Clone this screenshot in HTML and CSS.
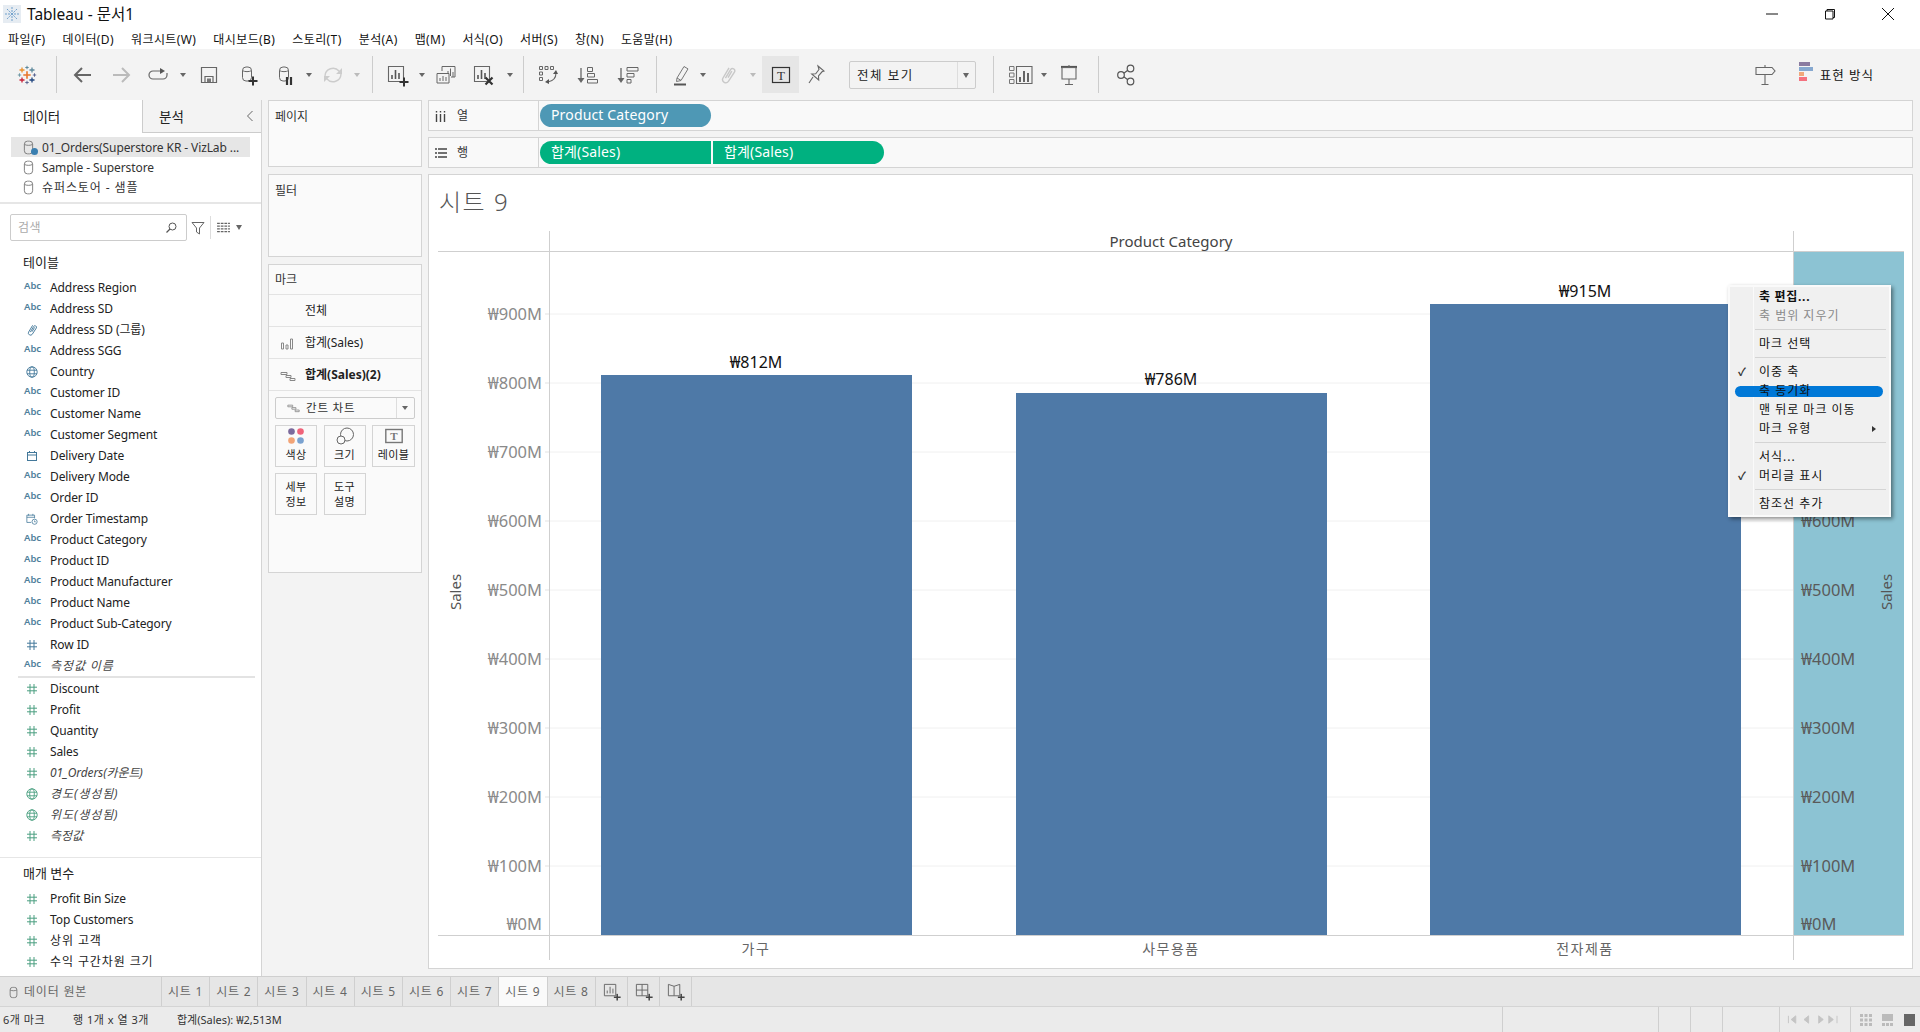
FILE: index.html
```html
<!DOCTYPE html>
<html lang="ko">
<head>
<meta charset="utf-8">
<title>Tableau - 문서1</title>
<link rel="stylesheet" href="styles.css">
</head>
<body>
<svg class="defs" aria-hidden="true">
  <symbol id="i-hash" viewBox="0 0 12 12"><path d="M4 1v10M8 1v10M1 4.2h10M1 7.8h10" fill="none" stroke="currentColor"/></symbol>
  <symbol id="i-globe" viewBox="0 0 12 12"><g fill="none" stroke="currentColor" stroke-width=".9"><circle cx="6" cy="6" r="5.2"/><ellipse cx="6" cy="6" rx="2.3" ry="5.2"/><path d="M1 4.2h10M1 7.8h10"/></g></symbol>
  <symbol id="i-cal" viewBox="0 0 12 12"><g fill="none" stroke="currentColor"><rect x="1.5" y="2.5" width="9" height="8"/><path d="M1.5 5h9M3.5 1v2M8.5 1v2"/></g></symbol>
  <symbol id="i-caltime" viewBox="0 0 14 14"><g fill="none" stroke="currentColor" stroke-width=".9"><path d="M6 11H1V2.5h9V6M1 5h9M3 1v2M8 1v2"/><circle cx="10" cy="10.2" r="3"/><path d="M10 8.7v1.6h1.4"/></g></symbol>
  <symbol id="i-clip" viewBox="0 0 12 14"><path d="M4 9.500 8 2.800a1.800 1.800 0 0 1 3.100 1.800L6.300 12a2.500 2.500 0 0 1-4.300-2.500L6.800 1.500M6 9 9 4" fill="none" stroke="currentColor" stroke-width="1.100"/></symbol>
  <symbol id="i-cyl" viewBox="0 0 12 16"><g fill="none" stroke="currentColor"><rect x="1.5" y="1" width="9" height="14" rx="3.5"/><path d="M1.5 4.6c2 1.4 7 1.4 9 0"/></g></symbol>
  <symbol id="i-plus" viewBox="0 0 10 10"><path d="M5 .5v9M.5 5h9" stroke="currentColor" stroke-width="2" fill="none"/></symbol>
  <symbol id="i-logo" viewBox="0 0 20 20"><g fill="none">
    <path d="M10 6.3v7.4M6.3 10h7.4" stroke="#e8762b" stroke-width="1.6"/>
    <path d="M5 2.5v5M2.5 5h5" stroke="#eb912b" stroke-width="1.3"/>
    <path d="M15 2.5v5M12.5 5h5" stroke="#5b879b" stroke-width="1.3"/>
    <path d="M5 12.5v5M2.5 15h5" stroke="#c72037" stroke-width="1.3"/>
    <path d="M15 12.5v5M12.5 15h5" stroke="#1f447e" stroke-width="1.3"/>
    <path d="M10 .8v3.4M8.3 2.5h3.4" stroke="#5b879b"/>
    <path d="M10 15.8v3.4M8.3 17.5h3.4" stroke="#5b6591"/>
    <path d="M2.5 8.3v3.4M.8 10h3.4" stroke="#7199a6"/>
    <path d="M17.5 8.3v3.4M15.8 10h3.4" stroke="#5b6591"/>
  </g></symbol>
  <symbol id="i-gantt" viewBox="0 0 16 12"><g fill="none" stroke="currentColor"><path d="M1 2.5h6v2H1zM6 5.5h5v2H6zM10 8.5h5v2h-5z"/></g></symbol>
</svg>

<div class="app">
  <header class="titlebar">
    <svg class="app-icon" viewBox="0 0 18 18"><rect width="18" height="18" fill="#e6ecf2"/><path d="M9 2v14M2 9h14M4 4l10 10M14 4 4 14" stroke="#6f9fcb" stroke-width="1" stroke-dasharray="2 1" fill="none"/></svg>
    <span class="title-text">Tableau - 문서1</span>
    <div class="win-controls">
      <svg class="win-btn" viewBox="0 0 12 12"><path d="M0 6h12" stroke="#111"/></svg>
      <svg class="win-btn" viewBox="0 0 12 12"><path d="M3 3V1.5h7.5v8H9M1.5 3H9v8H1.5z" fill="none" stroke="#111"/></svg>
      <svg class="win-btn" viewBox="0 0 12 12"><path d="M0 0l12 12M12 0 0 12" stroke="#111" fill="none"/></svg>
    </div>
  </header>
  <nav class="menubar">
    <span>파일(F)</span><span>데이터(D)</span><span>워크시트(W)</span><span>대시보드(B)</span><span>스토리(T)</span><span>분석(A)</span><span>맵(M)</span><span>서식(O)</span><span>서버(S)</span><span>창(N)</span><span>도움말(H)</span>
  </nav>

  <div class="toolbar">
    <div class="tb w56"><svg class="ic20" viewBox="0 0 20 20"><use href="#i-logo"/></svg></div>
    <i class="sep ml0 mr7"></i>
    <div class="tb w38"><svg class="ic" viewBox="0 0 24 24"><path d="M20 12H5M11 5l-7 7 7 7" fill="none" stroke="#666" stroke-width="2"/></svg></div>
    <div class="tb w38"><svg class="ic" viewBox="0 0 24 24"><path d="M4 12h15M13 5l7 7-7 7" fill="none" stroke="#bbb" stroke-width="2"/></svg></div>
    <div class="tb w36"><svg class="ic" viewBox="0 0 24 24"><path d="M14 8H7a4 4 0 0 0 0 8h10a4 4 0 0 0 4-4v-2" fill="none" stroke="#666" stroke-width="1.2"/><path d="M14 5l5 3-5 3z" fill="#555"/></svg></div>
    <div class="dd w14"></div>
    <div class="tb w38"><svg class="ic" viewBox="0 0 24 24"><path d="M4.5 4.500h15v15h-15z" fill="none" stroke="#666" stroke-width="1.2"/><path d="M8 19v-5.500h8V19" fill="none" stroke="#666" stroke-width="1.200"/><rect x="10" y="15.500" width="4" height="3.500" fill="#777"/></svg></div>
    <div class="tb w38 dark"><svg class="ic" viewBox="0 0 24 24"><use href="#i-cyl" x="6" y="3" width="12" height="16" color="#666"/><use href="#i-plus" x="13" y="13" width="10" height="10" color="#333"/></svg></div>
    <div class="tb w36"><svg class="ic" viewBox="0 0 24 24"><use href="#i-cyl" x="6" y="3" width="12" height="16" color="#666"/><path d="M15 14v8M19 14v8" stroke="#333" stroke-width="2.200"/></svg></div>
    <div class="dd w14"></div>
    <div class="tb w34"><svg class="ic" viewBox="0 0 24 24"><path d="M4 13a8 8 0 0 1 14-5l2 2M20 11a8 8 0 0 1-14 5l-2-2" fill="none" stroke="#ccc" stroke-width="1.400"/><path d="M21 5v6h-6zM3 19v-6h6z" fill="#ccc"/></svg></div>
    <div class="dd w14 light"></div>
    <i class="sep ml8 mr6"></i>
    <div class="tb w36"><svg class="ic" viewBox="0 0 24 24"><path d="M3.500 3.500h15v15h-15z" fill="none" stroke="#666" stroke-width="1.100"/><path d="M7 16v-4M10.500 16V7M14 16v-6" stroke="#555" stroke-width="1.600"/><use href="#i-plus" x="14" y="14" width="10" height="10" color="#333"/></svg></div>
    <div class="dd w14"></div>
    <div class="tb w34"><svg class="ic" viewBox="0 0 24 24"><path d="M8 8V3.500h13V14h-4" fill="none" stroke="#666"/><path d="M14 8v6M16.500 5.500V13M19 9v5" stroke="#666"/><path d="M3 10.500h12V20H3z" fill="#f3f3f3" stroke="#666"/><path d="M6 18v-3M9 18v-5M12 18v-4" stroke="#666"/></svg></div>
    <div class="tb w40"><svg class="ic" viewBox="0 0 24 24"><path d="M3.500 3.500h15v15h-15z" fill="none" stroke="#666" stroke-width="1.100"/><path d="M7 16v-4M10.500 16V7M14 16v-6" stroke="#555" stroke-width="1.600"/><path d="M14.500 14.500l7 7M21.500 14.500l-7 7" stroke="#333" stroke-width="2.200"/></svg></div>
    <div class="dd w14"></div>
    <i class="sep ml6 mr5"></i>
    <div class="tb w38"><svg class="ic" viewBox="0 0 24 24"><path d="M3.500 3.500h3v3h-3zM9 3.500h3v3H9zM14.500 3.500h3v3h-3zM3.500 9h3v3h-3zM3.500 14.500h3v3h-3z" fill="none" stroke="#666"/><path d="M20 10c0 5-3 8-8 9" fill="none" stroke="#666" stroke-width="1.100"/><path d="M20 7l-3 4h5zM9 19l4-3v5z" fill="#555"/></svg></div>
    <div class="tb w40"><svg class="ic" viewBox="0 0 24 24"><path d="M6 5v12" stroke="#666" stroke-width="1.300"/><path d="M2.500 15 6 20l3.500-5z" fill="#666"/><path d="M12.500 4.500h5v4h-5zM12.500 10.500h7v3.500h-7zM12.500 16.500h10v3.500h-10z" fill="none" stroke="#666"/></svg></div>
    <div class="tb w40"><svg class="ic" viewBox="0 0 24 24"><path d="M6 5v12" stroke="#666" stroke-width="1.300"/><path d="M2.500 15 6 20l3.500-5z" fill="#666"/><path d="M12 4.500h11v3.500H12zM12 10.500h7v3.500h-7zM12 16.500h4v3.500h-4z" fill="none" stroke="#666"/></svg></div>
    <i class="sep ml9 mr9"></i>
    <div class="tb w32"><svg class="ic" viewBox="0 0 24 24"><path d="M7 15 14 3.500l4 2.400-7 11.600-4.500 1z" fill="none" stroke="#777"/><path d="M7 15l4 2.400" stroke="#777"/><path d="M4 21.500h12" stroke="#555" stroke-width="2"/></svg></div>
    <div class="dd w10"></div>
    <div class="tb w40"><svg class="ic" viewBox="0 0 24 24"><use href="#i-clip" x="4" y="3" width="16" height="18" color="#c8c8c8"/></svg></div>
    <div class="dd w10 light"></div>
    <div class="tb w37 ml4 active"><svg class="ic" viewBox="0 0 24 24"><rect x="3.500" y="4.500" width="17" height="15" fill="none" stroke="#333" stroke-width="1.200"/><text class="t-icon" x="12" y="16.500" text-anchor="middle">T</text></svg></div>
    <div class="tb w34"><svg class="ic" viewBox="0 0 24 24"><path d="M14 3l6 5-2 .8-3.500 4.200.2 4-7-6 4-.2L15 6.500z M9 14l-4 6" fill="none" stroke="#666" stroke-width="1.100"/></svg></div>
    <div class="fit">
      <span class="fit-label">전체 보기</span>
      <span class="fit-arrow"></span>
    </div>
    <i class="sep ml17 mr9"></i>
    <div class="tb w36"><svg class="ic28" viewBox="0 0 28 24"><path d="M2.500 3.500H7v4H2.500zM2.500 10H7v4H2.500zM2.500 16.500H7v4H2.500z" fill="none" stroke="#777"/><path d="M9.500 3.500H25v17H9.500z" fill="none" stroke="#666" stroke-width="1.100"/><path d="M13 19v-5M17 19V8M21 19v-9" stroke="#666" stroke-width="2"/></svg></div>
    <div class="dd w10"></div>
    <div class="tb w40"><svg class="ic" viewBox="0 0 24 24"><path d="M4 4h16" stroke="#555" stroke-width="2.200"/><path d="M5 4.500h14v11.500H5zM12 16v5M8 21.500h8M12 2v2" fill="none" stroke="#666" stroke-width="1.100"/></svg></div>
    <i class="sep ml9 mr8"></i>
    <div class="tb w38"><svg class="ic" viewBox="0 0 24 24"><g fill="none" stroke="#555" stroke-width="1.200"><circle cx="7" cy="12" r="3.300"/><circle cx="16.500" cy="5.500" r="3.300"/><circle cx="16.500" cy="18.500" r="3.300"/><path d="M9.800 10.200 13.800 7.300M9.800 13.800l4 2.900"/></g></svg></div>
    <div class="tb-right">
      <div class="tb w38"><svg class="ic" viewBox="0 0 24 24"><path d="M3 4.500h16l3 3.500-3 3.500H3zM12 2v2.500M12 11.500V21M8.500 21.500h7" fill="none" stroke="#666" stroke-width="1.100"/></svg></div>
      <svg class="showme-ic" viewBox="0 0 14 20"><rect width="11" height="4" fill="#8a7ba0"/><rect y="5" width="14" height="4" fill="#86a8cf"/><rect y="10" width="5" height="4" fill="#f0a77a"/><rect y="15" width="8" height="4" fill="#f4727f"/></svg>
      <span class="showme-text">표현 방식</span>
    </div>
  </div>

  <div class="workspace">
    <aside class="data-pane">
      <div class="pane-tabs">
        <div class="pane-tab on">데이터</div>
        <div class="pane-tab">분석</div>
        <svg class="chev" viewBox="0 0 8 12"><path d="M6.500 1 1.500 6l5 5" fill="none" stroke="#666"/></svg>
      </div>
      <div class="sources">
        <div class="source sel"><span class="src-ic"><svg class="cyl" viewBox="0 0 12 16"><use href="#i-cyl"/></svg><b class="live"></b></span><span class="src-name">01_Orders(Superstore KR - VizLab ...</span></div>
        <div class="source"><span class="src-ic"><svg class="cyl" viewBox="0 0 12 16"><use href="#i-cyl"/></svg></span><span class="src-name">Sample - Superstore</span></div>
        <div class="source"><span class="src-ic"><svg class="cyl" viewBox="0 0 12 16"><use href="#i-cyl"/></svg></span><span class="src-name ko">슈퍼스토어 - 샘플</span></div>
      </div>
      <div class="search-row">
        <div class="search"><span class="ph">검색</span><svg class="mag" viewBox="0 0 12 12"><circle cx="7.500" cy="4.500" r="3.500" fill="none" stroke="#555"/><path d="M5 7 1.500 10.500" stroke="#555" stroke-width="1.200"/></svg></div>
        <svg class="funnel" viewBox="0 0 14 14"><path d="M1 1.500h12L8.500 7v6l-3-2V7z" fill="none" stroke="#666"/></svg>
        <i class="mini-sep"></i>
        <svg class="gridview" viewBox="0 0 14 12"><path d="M0 1.500h3M4 1.500h3M8 1.500h3M12 1.500h2M0 4.500h3M4 4.500h3M8 4.500h3M12 4.500h2M0 7.500h3M4 7.500h3M8 7.500h3M12 7.500h2M0 10.500h3M4 10.500h3M8 10.500h3M12 10.500h2" stroke="#666" stroke-width="1.300"/></svg>
        <i class="caret"></i>
      </div>
      <h3 class="sec-head first">테이블</h3>
      <ul class="fields dim">
        <li><span class="abc">Abc</span>Address Region</li>
        <li><span class="abc">Abc</span>Address SD</li>
        <li><svg class="f-ic" viewBox="0 0 12 14"><use href="#i-clip"/></svg>Address SD (그룹)</li>
        <li><span class="abc">Abc</span>Address SGG</li>
        <li><svg class="f-ic" viewBox="0 0 12 12"><use href="#i-globe"/></svg>Country</li>
        <li><span class="abc">Abc</span>Customer ID</li>
        <li><span class="abc">Abc</span>Customer Name</li>
        <li><span class="abc">Abc</span>Customer Segment</li>
        <li><svg class="f-ic" viewBox="0 0 12 12"><use href="#i-cal"/></svg>Delivery Date</li>
        <li><span class="abc">Abc</span>Delivery Mode</li>
        <li><span class="abc">Abc</span>Order ID</li>
        <li><svg class="f-ic" viewBox="0 0 14 14"><use href="#i-caltime"/></svg>Order Timestamp</li>
        <li><span class="abc">Abc</span>Product Category</li>
        <li><span class="abc">Abc</span>Product ID</li>
        <li><span class="abc">Abc</span>Product Manufacturer</li>
        <li><span class="abc">Abc</span>Product Name</li>
        <li><span class="abc">Abc</span>Product Sub-Category</li>
        <li><svg class="f-ic" viewBox="0 0 12 12"><use href="#i-hash"/></svg>Row ID</li>
        <li class="calc"><span class="abc">Abc</span><em class="ko">측정값 이름</em></li>
      </ul>
      <ul class="fields meas">
        <li><svg class="f-ic" viewBox="0 0 12 12"><use href="#i-hash"/></svg>Discount</li>
        <li><svg class="f-ic" viewBox="0 0 12 12"><use href="#i-hash"/></svg>Profit</li>
        <li><svg class="f-ic" viewBox="0 0 12 12"><use href="#i-hash"/></svg>Quantity</li>
        <li><svg class="f-ic" viewBox="0 0 12 12"><use href="#i-hash"/></svg>Sales</li>
        <li class="calc"><svg class="f-ic" viewBox="0 0 12 12"><use href="#i-hash"/></svg><em>01_Orders(카운트)</em></li>
        <li class="calc"><svg class="f-ic" viewBox="0 0 12 12"><use href="#i-globe"/></svg><em class="ko">경도(생성됨)</em></li>
        <li class="calc"><svg class="f-ic" viewBox="0 0 12 12"><use href="#i-globe"/></svg><em class="ko">위도(생성됨)</em></li>
        <li class="calc"><svg class="f-ic" viewBox="0 0 12 12"><use href="#i-hash"/></svg><em>측정값</em></li>
      </ul>
      <h3 class="sec-head param">매개 변수</h3>
      <ul class="fields params">
        <li><svg class="f-ic" viewBox="0 0 12 12"><use href="#i-hash"/></svg>Profit Bin Size</li>
        <li><svg class="f-ic" viewBox="0 0 12 12"><use href="#i-hash"/></svg>Top Customers</li>
        <li><svg class="f-ic" viewBox="0 0 12 12"><use href="#i-hash"/></svg><span class="ko">상위 고객</span></li>
        <li><svg class="f-ic" viewBox="0 0 12 12"><use href="#i-hash"/></svg><span class="ko">수익 구간차원 크기</span></li>
      </ul>
    </aside>

    <section class="cards">
      <div class="card pages"><div class="card-title">페이지</div></div>
      <div class="card filters"><div class="card-title">필터</div></div>
      <div class="card marks">
        <div class="card-title mark-head">마크</div>
        <div class="mark-row"><span class="mark-ic"></span>전체</div>
        <div class="mark-row"><span class="mark-ic"><svg class="bars-ic" viewBox="0 0 14 12"><path d="M1.500 5h2v6h-2zM6 7h2v4H6zM10.500 1h2v10h-2z" fill="none" stroke="#888"/></svg></span>합계(Sales)</div>
        <div class="mark-row strong"><span class="mark-ic"><svg class="gantt-ic" viewBox="0 0 16 12"><use href="#i-gantt"/></svg></span>합계(Sales)(2)</div>
        <div class="mark-type">
          <svg class="gantt-sm" viewBox="0 0 16 12"><use href="#i-gantt"/></svg>
          <span>간트 차트</span>
          <span class="mt-arrow"></span>
        </div>
        <div class="mark-btns">
          <div class="mbtn"><svg class="mb-ic" viewBox="0 0 18 18"><circle cx="4.500" cy="4.500" r="3.300" fill="#7b6a9c"/><circle cx="13.500" cy="4.500" r="3.300" fill="#f0637a"/><circle cx="4.500" cy="13.500" r="3.300" fill="#f2a477"/><circle cx="13.500" cy="13.500" r="3.300" fill="#7aa2d0"/></svg>색상</div>
          <div class="mbtn"><svg class="mb-ic" viewBox="0 0 18 18"><circle cx="11" cy="7.500" r="6.500" fill="none" stroke="#666"/><circle cx="5" cy="13" r="4" fill="#fafafa" stroke="#666"/></svg>크기</div>
          <div class="mbtn"><svg class="mb-ic" viewBox="0 0 18 18"><rect x=".8" y="2.500" width="16.400" height="13" fill="none" stroke="#777" stroke-width="1.400"/><text class="t-mark" x="9" y="12.800" text-anchor="middle">T</text></svg>레이블</div>
          <div class="mbtn two">세부<br>정보</div>
          <div class="mbtn two">도구<br>설명</div>
        </div>
      </div>
    </section>

    <section class="main">
      <div class="shelf">
        <div class="shelf-label"><svg class="sh-ic" viewBox="0 0 12 12"><path d="M1.500 1v1.500M5.500 1v1.500M9.500 1v1.500M1.500 4v8M5.500 4v8M9.500 4v8" stroke="#444" stroke-width="1.400"/></svg>열</div>
        <div class="pill blue">Product Category</div>
      </div>
      <div class="shelf">
        <div class="shelf-label"><svg class="sh-ic" viewBox="0 0 12 12"><path d="M0 2h2M3 2h9M0 6h2M3 6h9M0 10h2M3 10h9" stroke="#444" stroke-width="1.400"/></svg>행</div>
        <div class="pill green first">합계(Sales)</div>
        <div class="pill green last">합계(Sales)</div>
      </div>
      <div class="viz">
        <div class="viz-title">시트 9</div>
        <svg class="chart" viewBox="429 231 1483 737">
          <g class="grid">
            <path d="M549 866H1793M549 797H1793M549 728H1793M549 659H1793M549 590H1793M549 521H1793M549 452H1793M549 383H1793M549 314H1793"/>
          </g>
          <g class="ticks"><path d="M545 866h4M545 797h4M545 728h4M545 659h4M545 590h4M545 521h4M545 452h4M545 383h4M545 314h4"/></g>
          <rect x="1793" y="252" width="111" height="683" fill="#8cc3d3"/>
          <rect x="601" y="375" width="311" height="560" fill="#4e79a7"/>
          <rect x="1016" y="393" width="311" height="542" fill="#4e79a7"/>
          <rect x="1430" y="304" width="311" height="631" fill="#4e79a7"/>
          <g class="axis-lines">
            <path d="M438 251.500H1904M438 935.500H1904M549.500 231V960M1793.500 231V960"/>
          </g>
          <text class="hdr" x="1171" y="247" text-anchor="middle">Product Category</text>
          <g class="ax-l" text-anchor="end">
            <text x="542" y="320">₩900M</text><text x="542" y="389">₩800M</text><text x="542" y="458">₩700M</text><text x="542" y="527">₩600M</text><text x="542" y="596">₩500M</text><text x="542" y="665">₩400M</text><text x="542" y="734">₩300M</text><text x="542" y="803">₩200M</text><text x="542" y="872">₩100M</text><text x="542" y="930">₩0M</text>
          </g>
          <g class="ax-r">
            <text x="1801" y="527">₩600M</text><text x="1801" y="596">₩500M</text><text x="1801" y="665">₩400M</text><text x="1801" y="734">₩300M</text><text x="1801" y="803">₩200M</text><text x="1801" y="872">₩100M</text><text x="1801" y="930">₩0M</text>
          </g>
          <text class="ax-title" transform="translate(461 592) rotate(-90)" text-anchor="middle">Sales</text>
          <text class="ax-title" transform="translate(1892 592) rotate(-90)" text-anchor="middle">Sales</text>
          <g class="val" text-anchor="middle">
            <text x="756" y="368">₩812M</text><text x="1171" y="385">₩786M</text><text x="1585" y="297">₩915M</text>
          </g>
          <g class="cat" text-anchor="middle">
            <text x="756" y="954">가구</text><text x="1171" y="954">사무용품</text><text x="1585" y="954">전자제품</text>
          </g>
        </svg>
      </div>
    </section>
  </div>

  <div class="tabbar">
    <div class="tab src"><svg class="tab-cyl" viewBox="0 0 12 16"><use href="#i-cyl"/></svg>데이터 원본</div>
    <div class="tab">시트 1</div><div class="tab">시트 2</div><div class="tab">시트 3</div><div class="tab">시트 4</div><div class="tab">시트 5</div><div class="tab">시트 6</div><div class="tab">시트 7</div><div class="tab on">시트 9</div><div class="tab">시트 8</div>
    <div class="tab add"><svg class="tab-ic" viewBox="0 0 20 20"><path d="M2.500 2.500h12v12h-12z" fill="none" stroke="#666"/><path d="M5.500 12V9M8.500 12V5M11.500 12V7" stroke="#666"/><use href="#i-plus" x="12" y="12" width="8" height="8" color="#444"/></svg></div>
    <div class="tab add"><svg class="tab-ic" viewBox="0 0 20 20"><path d="M2.500 2.500h12v12h-12zM2.500 8.500h12M8.500 2.500v12" fill="none" stroke="#666"/><use href="#i-plus" x="12" y="12" width="8" height="8" color="#444"/></svg></div>
    <div class="tab add"><svg class="tab-ic" viewBox="0 0 20 20"><path d="M2.500 2.500l6 2 6-2v12h-6l-6 0zM8.500 4.500v10" fill="none" stroke="#666"/><use href="#i-plus" x="12" y="12" width="8" height="8" color="#444"/></svg></div>
  </div>

  <footer class="status">
    <span class="st-a">6개 마크</span>
    <span class="st-b">행 1개 x 열 3개</span>
    <span class="st-c">합계(Sales): ₩2,513M</span>
    <div class="st-cell w156"></div>
    <div class="st-cell w32"></div>
    <div class="st-cell w32"></div>
    <div class="st-cell w57"></div>
    <div class="st-cell w71 navs"><svg class="nav-ic" viewBox="0 0 60 12"><path d="M1 2v8M9 2 4 6l5 4zM23 2l-5 4 5 4zM34 2l5 4-5 4zM45 2l5 4-5 4zM54 2v8" stroke="#c4c4c4" fill="#c4c4c4"/></svg></div>
    <div class="st-cell views"><svg class="view-ic" viewBox="0 0 60 12"><path d="M0 0h3v3H0zM4.500 0h3v3h-3zM9 0h3v3H9zM0 4.500h3v3H0zM4.500 4.500h3v3h-3zM9 4.500h3v3H9zM0 9h3v3H0zM4.500 9h3v3h-3zM9 9h3v3H9z" fill="#bbb"/><path d="M22 0h11v7H22zM22 9h3v3h-3zM26 9h3v3h-3zM30 9h3v3h-3z" fill="#bbb"/><rect x="44" y="0" width="11" height="12" fill="#666"/></svg></div>
  </footer>

  <div class="ctx-menu">
    <div class="ctx-item bold">축 편집...</div>
    <div class="ctx-item off">축 범위 지우기</div>
    <div class="ctx-sep"></div>
    <div class="ctx-item">마크 선택</div>
    <div class="ctx-sep"></div>
    <div class="ctx-item checked">이중 축</div>
    <div class="ctx-item hot"><span>축 동기화</span></div>
    <div class="ctx-item">맨 뒤로 마크 이동</div>
    <div class="ctx-item sub">마크 유형</div>
    <div class="ctx-sep"></div>
    <div class="ctx-item">서식...</div>
    <div class="ctx-item checked">머리글 표시</div>
    <div class="ctx-sep"></div>
    <div class="ctx-item">참조선 추가</div>
  </div>
</div>
</body>
</html>
```

FILE: styles.css
```css
* { box-sizing: border-box; }
html, body { margin: 0; padding: 0; }
body {
  width: 1920px; height: 1032px; overflow: hidden; background: #fff; color: #222;
  font: 12px/1.2 "Noto Sans", "Noto Sans CJK KR", sans-serif;
}
.defs { position: absolute; width: 0; height: 0; }
ul { list-style: none; margin: 0; padding: 0; }
h3 { margin: 0; font-weight: 400; }
em { font-style: italic; color: #444; }
i { display: block; font-style: normal; }
.ko { letter-spacing: .9px; }
.app { position: relative; width: 1920px; height: 1032px; display: flex; flex-direction: column; }

/* title + menu */
.titlebar { height: 28px; display: flex; align-items: center; padding-left: 3px; flex: none; }
.app-icon { width: 18px; height: 18px; }
.title-text { margin-left: 6px; font-size: 15.500px; color: #111; }
.win-controls { margin-left: auto; display: flex; gap: 46px; padding-right: 26px; }
.win-btn { width: 12px; height: 12px; }
.menubar { height: 21px; display: flex; align-items: center; gap: 17px; padding: 3px 0 0 8px; flex: none; color: #111; letter-spacing: .4px; }

/* toolbar */
.toolbar { height: 51px; flex: none; background: #f3f3f3; display: flex; align-items: center; }
.tb { height: 37px; display: flex; align-items: center; justify-content: center; flex: none; }
.w32 { width: 32px; } .w34 { width: 34px; } .w36 { width: 36px; } .w37 { width: 37px; } .w38 { width: 38px; } .w40 { width: 40px; } .w56 { width: 56px; }
.w10 { width: 10px; } .w14 { width: 14px; }
.ic { width: 24px; height: 24px; }
.ic20 { width: 20px; height: 20px; margin-left: -2px; }
.ic28 { width: 28px; height: 24px; }
.dd { height: 37px; flex: none; position: relative; }
.dd::after { content: ""; position: absolute; left: 50%; top: 17px; margin-left: -3px; border: 3px solid transparent; border-top: 4px solid #666; border-bottom: 0; }
.dd.light::after { border-top-color: #bbb; }
.sep { width: 1px; height: 37px; background: #ccc; flex: none; }
.ml0 { margin-left: 0; } .ml4 { margin-left: 4px; } .ml6 { margin-left: 6px; } .ml8 { margin-left: 8px; } .ml9 { margin-left: 9px; } .ml10 { margin-left: 10px; } .ml17 { margin-left: 17px; }
.mr5 { margin-right: 5px; } .mr6 { margin-right: 6px; } .mr7 { margin-right: 7px; } .mr8 { margin-right: 8px; } .mr9 { margin-right: 9px; }
.active { background: #e6e6e6; }
.t-icon { font: 13px "Liberation Serif", serif; fill: #333; }
.t-mark { font: bold 11px "Liberation Serif", serif; fill: #777; }
.fit { margin-left: 16px; width: 127px; height: 28px; flex: none; border: 1px solid #ccc; border-radius: 2px; display: flex; align-items: center; position: relative; padding-left: 7px; letter-spacing: 1.500px; color: #222; font-size: 12.500px; }
.fit-label { flex: 1; padding-top: 1px; }
.fit-arrow { width: 18px; height: 26px; border-left: 1px solid #ddd; position: relative; }
.fit-arrow::after { content: ""; position: absolute; left: 5px; top: 11px; border: 3.500px solid transparent; border-top: 5px solid #666; border-bottom: 0; }
.tb-right { margin-left: auto; display: flex; align-items: center; padding-right: 46px; }
.showme-ic { width: 14px; height: 20px; margin-left: 15px; margin-top: -6px; }
.showme-text { margin-left: 7px; padding-top: 2px; color: #111; letter-spacing: 1px; font-size: 12.500px; }

/* workspace */
.workspace { height: 876px; flex: none; background: #f3f3f3; display: flex; }
.data-pane { width: 262px; flex: none; background: #fff; border-right: 1px solid #d4d4d4; }
.pane-tabs { height: 33px; display: flex; position: relative; }
.pane-tab { padding-left: 16px; width: 118px; line-height: 35px; font-size: 13.500px; color: #222; background: #f3f3f3; border-bottom: 1px solid #ccc; flex: 1; }
.pane-tab.on { flex: none; width: 143px; padding-left: 23px; background: #fff; border-right: 1px solid #ccc; border-bottom: 0; }
.chev { position: absolute; right: 7px; top: 10px; width: 8px; height: 12px; }
.sources { height: 71px; padding: 4px 0 0 11px; border-bottom: 2px solid #e6e6e6; }
.source { height: 20px; width: 239px; display: flex; align-items: center; color: #333; }
.source.sel { background: #e6e6e6; }
.src-ic { width: 31px; padding-left: 12px; position: relative; display: flex; }
.src-name { padding-top: 2px; letter-spacing: -.1px; }
.src-name.ko { letter-spacing: .9px; }
.cyl { width: 11px; height: 15px; color: #777; }
.live { position: absolute; left: 20px; top: 8px; width: 7px; height: 7px; border-radius: 50%; background: #3a7fb0; }
.search-row { height: 27px; margin: 10px 0 0 10px; display: flex; align-items: center; }
.search { width: 177px; height: 27px; border: 1px solid #ccc; border-radius: 2px; display: flex; align-items: center; justify-content: space-between; padding: 0 9px 0 7px; color: #aaa; }
.ph { padding-top: 2px; letter-spacing: .5px; }
.mag { width: 12px; height: 12px; }
.funnel { width: 14px; height: 14px; margin-left: 4px; }
.mini-sep { width: 1px; height: 23px; background: #ddd; margin-left: 5px; }
.gridview { width: 13px; height: 11px; margin-left: 6px; }
.caret { margin-left: 6px; border: 3.500px solid transparent; border-top: 5px solid #666; border-bottom: 0; }
.sec-head { font-size: 13px; color: #222; padding-left: 23px; }
.sec-head.first { height: 36px; line-height: 42px; }
.sec-head.param { height: 31px; line-height: 30px; border-top: 1px solid #e6e6e6; margin-top: 11px; }
.fields li { height: 21px; display: flex; align-items: center; padding: 2px 0 0 50px; position: relative; color: #222; white-space: nowrap; letter-spacing: -.1px; }
.fields li .ko { letter-spacing: .9px; }
.abc { position: absolute; left: 24px; top: 3px; width: 16px; font-size: 9.500px; font-weight: 600; text-align: center; color: #4f7f9b; letter-spacing: 0; }
.f-ic { position: absolute; left: 26px; top: 5px; width: 12px; height: 12px; color: #43789a; }
.fields.dim { border-bottom: 0; position: relative; }
.fields.dim::after { content: ""; display: block; height: 2px; margin: 0 6px 0 18px; background: #e3e3e3; }
.meas .f-ic, .params .f-ic { color: #4a9f80; }

/* cards */
.cards { width: 154px; margin-left: 6px; flex: none; display: flex; flex-direction: column; gap: 7px; }
.card { background: #fafafa; border: 1px solid #d4d4d4; }
.pages { height: 67px; } .filters { height: 83px; } .marks { height: 309px; }
.card-title { padding: 9px 6px; color: #333; }
.mark-head { height: 30px; padding: 8px 6px 0; border-bottom: 1px solid #e3e3e3; }
.mark-row { height: 32px; border-bottom: 1px solid #e3e3e3; padding-top: 2px; display: flex; align-items: center; color: #222; }
.mark-row.strong { font-weight: 700; }
.mark-ic { width: 36px; padding-left: 11px; display: flex; color: #888; }
.bars-ic { width: 14px; height: 12px; }
.gantt-ic { width: 16px; height: 12px; }
.mark-type { margin: 6px 6px 0; height: 22px; border: 1px solid #ccc; border-radius: 2px; display: flex; align-items: center; padding-left: 11px; color: #333; letter-spacing: .8px; font-size: 11.500px; position: relative; background: #fafafa; }
.gantt-sm { width: 13px; height: 10px; margin-right: 6px; color: #888; }
.mt-arrow { position: absolute; right: 0; top: 0; width: 18px; height: 20px; border-left: 1px solid #ddd; }
.mt-arrow::after { content: ""; position: absolute; left: 5px; top: 8px; border: 3.500px solid transparent; border-top: 4px solid #666; border-bottom: 0; }
.mark-btns { margin: 6px 6px 0; display: grid; grid-template-columns: 42px 42px 43px; column-gap: 6.500px; row-gap: 6px; }
.mbtn { height: 42px; border: 1px solid #d4d4d4; display: flex; flex-direction: column; align-items: center; justify-content: flex-end; font-size: 11px; line-height: 14px; padding-bottom: 4px; color: #222; text-align: center; letter-spacing: .3px; }
.mbtn.two { justify-content: center; padding: 0; line-height: 15px; display: block; padding-top: 5px; }
.mb-ic { width: 18px; height: 18px; margin-bottom: 3px; }

/* shelves + viz */
.main { width: 1485px; margin-left: 6px; flex: none; display: flex; flex-direction: column; }
.shelf { height: 31px; margin-bottom: 6px; background: #f9f9f9; border: 1px solid #d4d4d4; display: flex; align-items: center; }
.shelf-label { width: 110px; height: 29px; border-right: 1px solid #d4d4d4; display: flex; align-items: center; padding: 2px 0 0 6px; color: #333; gap: 10px; flex: none; }
.sh-ic { width: 12px; height: 12px; margin-top: -2px; }
.pill { height: 23px; line-height: 22px; color: #fff; font-size: 14px; padding-left: 11px; margin-left: 1px; width: 171px; letter-spacing: .15px; }
.pill.blue { background: #4e98b5; border-radius: 11.500px; }
.pill.green { background: #00b180; }
.pill.first { border-radius: 11.500px 0 0 11.500px; }
.pill.last { margin-left: 2px; border-radius: 0 11.500px 11.500px 0; }
.viz { height: 795px; background: #fff; border: 1px solid #d4d4d4; flex: none; }
.viz-title { height: 56px; padding: 13px 0 0 10px; font-size: 24px; font-weight: 300; color: #555; letter-spacing: 1.500px; }
.chart { display: block; width: 1483px; height: 737px; font-family: "Noto Sans", "Noto Sans CJK KR", sans-serif; }
.grid path { stroke: #f0f0f0; fill: none; }
.ticks path { stroke: #e3e3e3; fill: none; }
.axis-lines path { stroke: #cfcfcf; fill: none; }
.hdr { font-size: 15px; fill: #444; }
.ax-l { font-size: 16.500px; fill: #8a8a8a; }
.ax-r { font-size: 16.500px; fill: #5a5a5a; }
.ax-title { font-size: 15px; fill: #555; }
.val { font-size: 16px; fill: #111; }
.cat { font-size: 14px; fill: #666; letter-spacing: 1.500px; }

/* tabs + status */
.tabbar { height: 30px; flex: none; background: #e6e6e6; border-top: 1px solid #cfcfcf; display: flex; color: #666; }
.tab { width: 48.200px; display: flex; align-items: center; justify-content: center; padding-top: 2px; border-right: 1px solid #cfcfcf; letter-spacing: .8px; flex: none; }
.tab.src { width: 162px; justify-content: flex-start; padding-left: 9px; gap: 6px; }
.tab.on { background: #fafafa; }
.tab.add { width: 32px; padding-top: 0; }
.tab-cyl { width: 9px; height: 13px; color: #666; }
.tab-ic { width: 19px; height: 19px; }
.status { height: 26px; flex: none; background: #ebebeb; border-top: 1px solid #d4d4d4; display: flex; align-items: center; font-size: 11px; color: #333; }
.st-a { margin-left: 3px; width: 70px; letter-spacing: .5px; }
.st-b { width: 104px; letter-spacing: .5px; }
.st-c { width: 1325px; flex: none; }
.st-cell { height: 25px; border-left: 1px solid #cfcfcf; flex: none; display: flex; align-items: center; }
.w57 { width: 57px; } .w71 { width: 71px; } .w156 { width: 156px; }
.st-c + .st-cell { margin-left: 0; }
.navs { padding-left: 6px; }
.nav-ic { width: 58px; height: 11px; }
.views { flex: 1; padding-left: 9px; }
.view-ic { width: 60px; height: 12px; }

/* context menu */
.ctx-menu { position: absolute; left: 1728px; top: 285px; width: 163px; height: 232px; background: #f0f0f0; border: 2px solid #fafafa; box-shadow: 2px 2px 4px rgba(0,0,0,.45); color: #111; letter-spacing: 1px; }
.ctx-menu::before { content: ""; position: absolute; left: 23px; top: 0; bottom: 0; width: 1px; background: #fafafa; }
.ctx-item { height: 19px; line-height: 20px; padding-left: 29px; position: relative; white-space: nowrap; }
.ctx-item.bold { font-weight: 700; letter-spacing: .7px; }
.ctx-item.off { color: #8a8a8a; }
.ctx-sep { height: 9px; position: relative; }
.ctx-sep::after { content: ""; position: absolute; left: 25px; right: 3px; top: 4px; height: 1px; background: #d4d4d4; }
.ctx-item.hot::before { content: ""; position: absolute; left: 5px; top: 5px; width: 148px; height: 11px; border-radius: 5.500px; background: #0078d7; }
.ctx-item.hot span { position: relative; }
.ctx-item.checked::before { content: "✓"; position: absolute; left: 8px; top: 0; font-size: 11px; font-weight: 700; color: #333; }
.ctx-item.sub::after { content: ""; position: absolute; right: 13px; top: 7px; border: 3px solid transparent; border-left: 4px solid #333; border-right: 0; }
```
